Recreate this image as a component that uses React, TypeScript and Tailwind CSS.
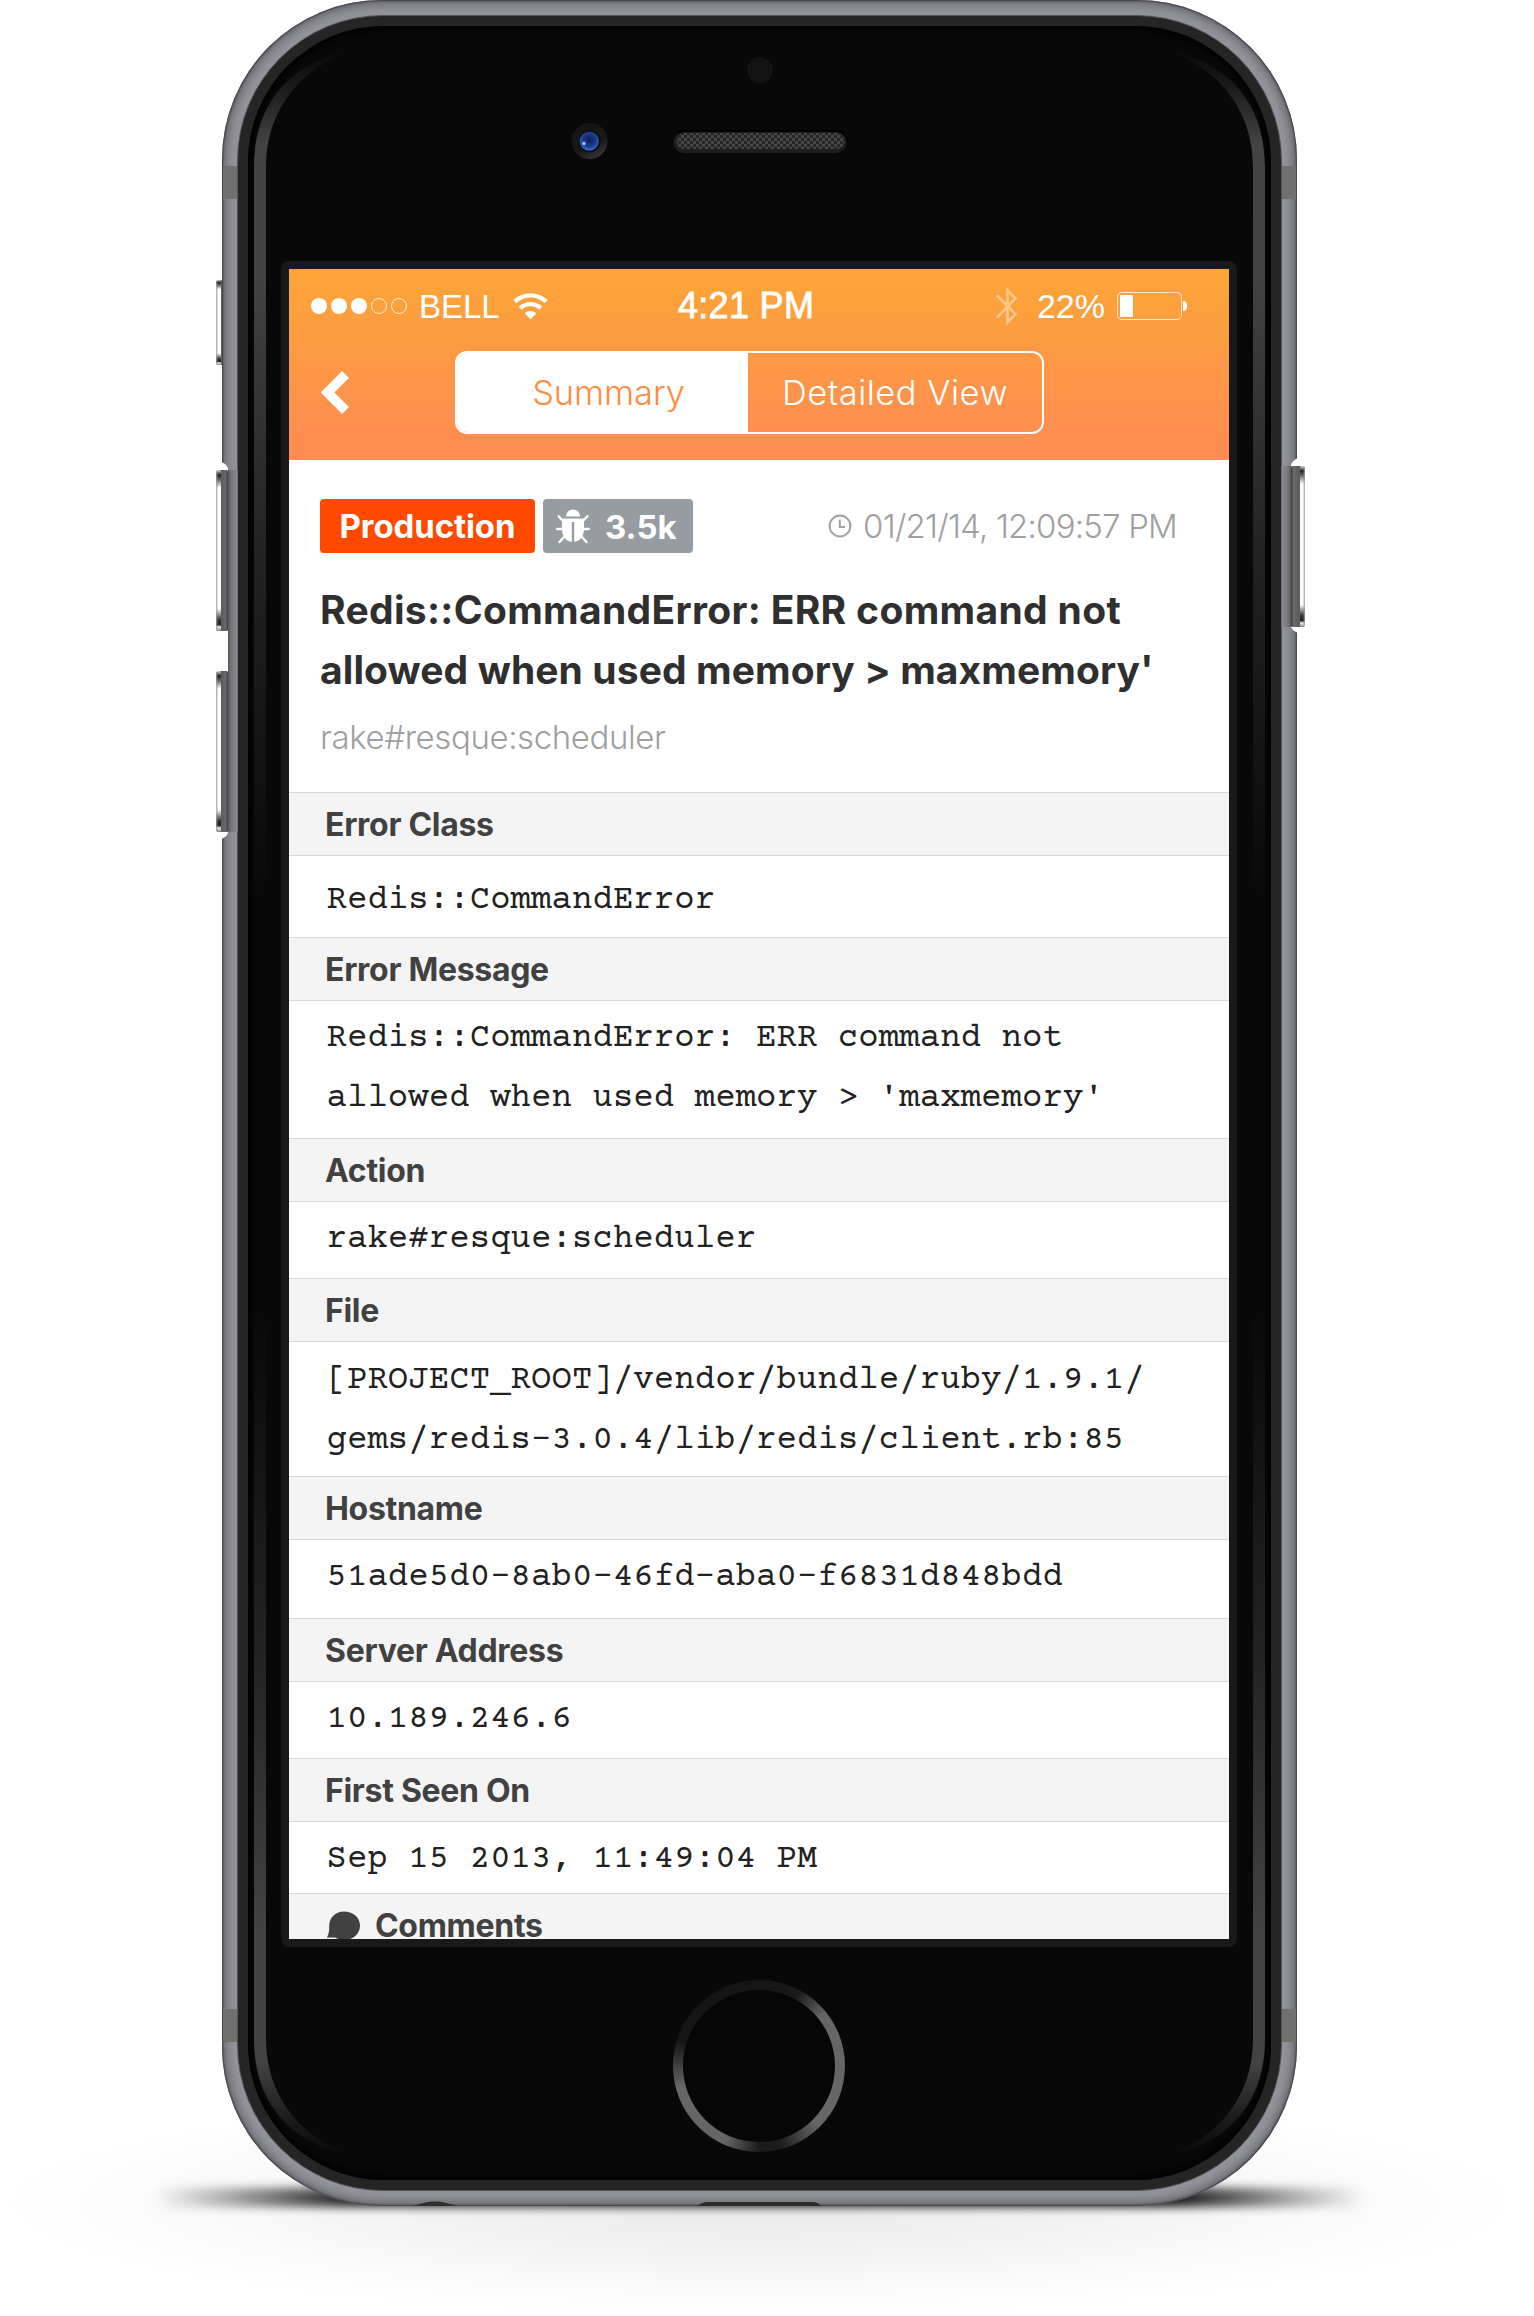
import type { ReactNode } from "react";

type Row = { label: string; lines: string[]; box: string };

const rows: Row[] = [
  { label: "Error Class", lines: ["Redis::CommandError"], box: "h-[81px] pt-[15px]" },
  {
    label: "Error Message",
    lines: ["Redis::CommandError: ERR command not", "allowed when used memory > 'maxmemory'"],
    box: "h-[137px] pt-[8px]",
  },
  { label: "Action", lines: ["rake#resque:scheduler"], box: "h-[76px] pt-[8px]" },
  {
    label: "File",
    lines: ["[PROJECT_ROOT]/vendor/bundle/ruby/1.9.1/", "gems/redis-3.0.4/lib/redis/client.rb:85"],
    box: "h-[134px] pt-[9px]",
  },
  { label: "Hostname", lines: ["51ade5d0-8ab0-46fd-aba0-f6831d848bdd"], box: "h-[78px] pt-[8px]" },
  { label: "Server Address", lines: ["10.189.246.6"], box: "h-[76px] pt-[8px]" },
  { label: "First Seen On", lines: ["Sep 15 2013, 11:49:04 PM"], box: "h-[71px] pt-[8px]" },
];

function WifiIcon() {
  return (
    <svg className="h-[27px] w-[35px]" viewBox="0 0 35 27" fill="none">
      <path d="M1.8 8.6C10.6 0.3 24.4 0.3 33.2 8.6" stroke="#fff" strokeWidth="4.2" />
      <path d="M7.3 15.2C13 9.8 22 9.8 27.7 15.2" stroke="#fff" strokeWidth="4.2" />
      <path d="M11.8 20.2C15 17.2 20 17.2 23.2 20.2L17.5 26.5Z" fill="#fff" />
    </svg>
  );
}

function BluetoothIcon() {
  return (
    <svg className="h-[39px] w-[22px]" viewBox="0 0 22 39" fill="none">
      <path d="M1 8.5 19.5 27 11.5 35.5V3.5L19.5 11.5 1 30.5" stroke="#fff" strokeOpacity="0.42" strokeWidth="2.6" />
    </svg>
  );
}

function BugIcon() {
  return (
    <svg className="h-[35px] w-[34px]" viewBox="0 0 34 35" fill="none">
      <path d="M10 7.6C10 3.6 13 0.6 17 0.6S24 3.6 24 7.6Z" fill="#fff" />
      <path d="M6 9.6H28V20C28 28 23.5 32.6 18.2 32.8V13H15.8V32.8C10.5 32.6 6 28 6 20Z" fill="#fff" />
      <path
        d="M6.5 11.5 2.6 7.2M27.5 11.5 31.4 7.2M6.5 20H1.2M27.5 20H32.8M8.5 27.5 3.5 33M25.5 27.5 30.5 33"
        stroke="#fff"
        strokeWidth="2.4"
        strokeLinecap="round"
      />
    </svg>
  );
}

function ClockIcon() {
  return (
    <svg className="h-[24px] w-[24px]" viewBox="0 0 24 24" fill="none" stroke="#a0a0a0" strokeWidth="2">
      <circle cx="12" cy="12" r="10.4" />
      <path d="M11.8 5.5V13H17" />
    </svg>
  );
}

function CommentIcon() {
  return (
    <svg className="ml-px h-[30px] w-[35px]" viewBox="0 0 35 30">
      <path
        d="M18 0.5C26.5 0.5 34 6 34 14.5S27 29 18 29C14.5 29 11.5 28 9 26.5L0.8 26.6C2.6 23.5 3.4 20.5 3.2 15C3.2 6 10 0.5 18 0.5Z"
        fill="#414141"
      />
    </svg>
  );
}

function SectionHeader({ children }: { children: ReactNode }) {
  return (
    <div className="flex h-[64px] shrink-0 items-center border-y border-[#d9d9d9] bg-[#f4f4f4] pl-[36px] pt-[2px] text-[32px] font-bold tracking-[-0.3px] text-[#414141]">
      {children}
    </div>
  );
}

/* Case-edge highlight, drawn once and mirrored for the other corners. */
const glow = "M254 1103V167C254 112 282 64 352 50C300 69 266 110 266 167V1103Z";

function GlassReflections() {
  return (
    <svg className="pointer-events-none absolute left-0 top-0 h-[2316px] w-[1534px]" viewBox="0 0 1534 2316">
      <defs>
        <linearGradient id="edge" gradientUnits="userSpaceOnUse" x1="0" y1="50" x2="0" y2="900">
          <stop offset="0" stopColor="#080808" />
          <stop offset="0.045" stopColor="#1c1c1c" />
          <stop offset="0.11" stopColor="#434343" />
          <stop offset="0.27" stopColor="#424242" />
          <stop offset="0.58" stopColor="#232323" />
          <stop offset="1" stopColor="#080808" />
        </linearGradient>
        <pattern id="mesh" width="6" height="6" patternUnits="userSpaceOnUse">
          <rect width="6" height="6" fill="#262626" />
          <path d="M0 0h3v3h-3zM3 3h3v3h-3z" fill="#464646" />
        </pattern>
        <radialGradient id="lens" cx="0.5" cy="0.42" r="0.62">
          <stop offset="0" stopColor="#0a1c55" />
          <stop offset="0.6" stopColor="#1c3f92" />
          <stop offset="1" stopColor="#3a78e6" />
        </radialGradient>
        <linearGradient id="rim" x1="0.2" y1="0" x2="0.75" y2="1">
          <stop offset="0" stopColor="#131313" />
          <stop offset="0.65" stopColor="#191919" />
          <stop offset="1" stopColor="#3c3c3c" />
        </linearGradient>
      </defs>
      <path d={glow} fill="url(#edge)" />
      <path d={glow} fill="url(#edge)" transform="translate(1519 0) scale(-1 1)" />
      <path d={glow} fill="url(#edge)" transform="translate(0 2206) scale(1 -1)" />
      <path d={glow} fill="url(#edge)" transform="translate(1519 2206) scale(-1 -1)" />

      <circle cx="760" cy="70" r="13" fill="#131313" />
      <circle cx="589.5" cy="141" r="18" fill="url(#rim)" />
      <circle cx="589.5" cy="141.3" r="11" fill="#0c0c10" />
      <circle cx="589.3" cy="141.3" r="9.5" fill="url(#lens)" />
      <circle cx="584" cy="143.5" r="1.7" fill="#a9c2f2" />
      <rect x="676" y="129.5" width="168" height="12" rx="6" fill="#000" />
      <rect x="673.5" y="132" width="173" height="21" rx="10.5" fill="#1e1e1e" />
      <rect x="676.5" y="133" width="168" height="16" rx="8" fill="url(#mesh)" />
    </svg>
  );
}

function SideButton({ x, y, h, w, flip }: { x: number; y: number; h: number; w: number; flip?: boolean }) {
  return (
    <g transform={flip ? `translate(${2 * x + w} 0) scale(-1 1)` : undefined}>
      <rect x={x} y={y} width={w} height={h} rx="1.5" fill="url(#metal)" />
      <rect x={x} y={y} width="4.5" height={h} rx="1.5" fill="url(#metalEdge)" />
      <rect x={x} y={y + 1} width="0.8" height={h - 2} fill="#8a8a8a" />
    </g>
  );
}

function SideButtons() {
  return (
    <svg className="pointer-events-none absolute left-0 top-0 h-[2316px] w-[1534px]" viewBox="0 0 1534 2316">
      <defs>
        <linearGradient id="metal">
          <stop offset="0" stopColor="#8c8c8c" />
          <stop offset="0.4" stopColor="#5a5a5a" />
          <stop offset="0.8" stopColor="#6a6a6a" />
          <stop offset="1" stopColor="#3c3c3c" />
        </linearGradient>
        <linearGradient id="metalEdge" x1="0" y1="0" x2="0" y2="1">
          <stop offset="0" stopColor="#ddd" />
          <stop offset="0.03" stopColor="#222" />
          <stop offset="0.06" stopColor="#666" />
          <stop offset="0.11" stopColor="#fff" />
          <stop offset="0.86" stopColor="#fff" />
          <stop offset="0.93" stopColor="#333" />
          <stop offset="0.96" stopColor="#222" />
          <stop offset="0.975" stopColor="#eee" />
          <stop offset="1" stopColor="#888" />
        </linearGradient>
        <linearGradient id="cut">
          <stop offset="0" stopColor="#55565a" />
          <stop offset="0.3" stopColor="#74757a" />
          <stop offset="1" stopColor="#8a8b92" />
        </linearGradient>
      </defs>
      <path d="M221 462C225 463.500 228 465.500 228 470V832C228 835 225 837.500 221 839Z" fill="#fff" />
      <rect x="228" y="470" width="9.5" height="362" fill="url(#cut)" />
      <path d="M1298 458C1294 460 1291 462 1291 467V626C1291 629 1294 631 1298 633Z" fill="#fff" />
      <rect x="1281.5" y="466" width="9.5" height="161" fill="url(#cut)" transform="translate(2572.5 0) scale(-1 1)" />
      <SideButton x={216.5} y={280} w={6} h={85} />
      <SideButton x={216.5} y={470} w={11.5} h={161} />
      <SideButton x={216.5} y={671} w={11.5} h={161} />
      <SideButton x={1291} y={466} w={13.5} h={161} flip />
      <path d="M413 2206C422 2203.500 427 2201.500 435 2201.500S448 2203.500 457 2206Z" fill="#2e2e2e" />
      <path d="M697 2206C701 2204 703 2202 708 2202H812C817 2202 818 2204 822 2206Z" fill="#2a2a2a" />
    </svg>
  );
}

export default function App() {
  return (
    <main className="relative h-[2316px] w-[1534px] overflow-hidden bg-white font-['Inter',sans-serif]">
      <div className="absolute left-0 top-[2090px] h-[226px] w-[1519px] bg-[radial-gradient(ellipse_50%_50%_at_50%_50%,#e9e9e9_0%,#f1f1f1_40%,#fafafa_75%,#ffffff_100%)]" />
      <div className="absolute left-[154px] top-[2188px] h-[19px] w-[1211px] rounded-full bg-[linear-gradient(90deg,transparent_0%,#bbbbbb_5%,#222222_16%,#111111_84%,#bbbbbb_95%,transparent_100%)] blur-[5px]" />

      <div className="relative ml-[222px] flex h-[2206px] w-[1075px] flex-col overflow-hidden rounded-[160px] bg-[#94959b] p-[15px] shadow-[inset_0_0_2px_1px_#3c3d42,inset_0_0_12px_3px_#5b5c62]">
        <div className="absolute left-[1px] top-[166px] h-[33px] w-[1073px] bg-[#70706e]" />
        <div className="absolute left-[1px] top-[2009px] h-[33px] w-[1073px] bg-[#70706e]" />
        <div className="relative flex-1 rounded-[146px] border border-[#55565a] bg-[#252525] p-[10px]">
          <div className="h-full rounded-[136px] bg-[#080808] pl-[33px] pt-[235px] shadow-[inset_0_0_7px_3px_#000000]">
            <div className="w-[956px] rounded-lg bg-[#191919] p-2">
              <div className="flex h-[1670px] flex-col overflow-hidden bg-white">
                <header className="h-[191px] shrink-0 bg-[linear-gradient(180deg,#fca636_0%,#fd9944_45%,#ff8b54_100%)] text-white">
                  <div className="grid h-[74px] grid-cols-[389px_200px_1fr] items-center font-['Liberation_Sans',Arial,sans-serif]">
                    <div className="flex items-center pl-[22px]">
                      <div className="flex gap-1">
                        <span className="size-4 rounded-full bg-white" />
                        <span className="size-4 rounded-full bg-white" />
                        <span className="size-4 rounded-full bg-white" />
                        <span className="size-4 rounded-full border border-white/80" />
                        <span className="size-4 rounded-full border border-white/80" />
                      </div>
                      <span className="ml-[12px] mr-[13px] text-[33px] leading-none">BELL</span>
                      <WifiIcon />
                    </div>
                    <span className="whitespace-nowrap text-[36px] leading-none tracking-[0.3px] [-webkit-text-stroke:0.8px_#fff]">
                      4:21 PM
                    </span>
                    <div className="flex items-center justify-end pr-[42px]">
                      <BluetoothIcon />
                      <span className="ml-[19px] mr-[12px] text-[34px] leading-none">22%</span>
                      <span className="flex h-[28px] w-[65px] rounded-[5px] border-[1.5px] border-white/75 p-[2px]">
                        <span className="w-[13px] rounded-[1px] bg-white" />
                      </span>
                      <span className="ml-[1px] h-[10px] w-1 rounded-r-full bg-white" />
                    </div>
                  </div>
                  <div className="flex pt-[8px]">
                    <div className="flex h-[83px] w-[166px] items-center pl-[32px]">
                      <svg className="h-[43px] w-[29px]" viewBox="0 0 29 43" fill="none">
                        <path d="M24.500 3.500 6.500 21.500 24.500 39.500" stroke="#fff" strokeWidth="9.6" />
                      </svg>
                    </div>
                    <div className="flex h-[83px] w-[589px] overflow-hidden rounded-xl border-2 border-white text-[34.5px] font-light leading-none">
                      <div className="flex w-[291px] items-center justify-center bg-white pl-[12px] pt-px tracking-[-0.1px] text-[#ff8c40]">
                        Summary
                      </div>
                      <div className="flex flex-1 items-center justify-center pt-px tracking-[0.5px]">Detailed View</div>
                    </div>
                  </div>
                </header>

                <section className="h-[332px] shrink-0 pl-[31px] pr-[52px] pt-[39px]">
                  <div className="flex h-[54px] items-center">
                    <span className="flex h-full w-[215px] items-center justify-center rounded bg-[#ff4800] pt-[2px] text-[33px] font-bold tracking-[-0.1px] text-white">
                      Production
                    </span>
                    <span className="ml-2 flex h-full w-[150px] items-center rounded bg-[#969ca1] pl-[13px] text-[33px] font-bold text-white">
                      <BugIcon />
                      <span className="ml-[15px] pt-[4px]">3.5k</span>
                    </span>
                    <span className="ml-auto flex items-center whitespace-nowrap text-[33px] font-light tracking-[-0.8px] text-[#a0a0a0]">
                      <ClockIcon />
                      <span className="ml-[11px] pt-px">01/21/14, 12:09:57 PM</span>
                    </span>
                  </div>
                  <h1 className="mt-[27px] whitespace-nowrap text-[39px] font-bold leading-[60px] text-[#2f2f2f]">
                    <span className="block tracking-[0.33px]">Redis::CommandError: ERR command not</span>
                    <span className="block tracking-[0.1px]">allowed when used memory &gt; maxmemory'</span>
                  </h1>
                  <p className="mt-[7px] text-[33px] font-light leading-[60px] tracking-[-0.4px] text-[#9f9f9f]">
                    rake#resque:scheduler
                  </p>
                </section>

                {rows.map((row) => (
                  <section key={row.label} className="shrink-0">
                    <SectionHeader>{row.label}</SectionHeader>
                    <div
                      className={`${row.box} whitespace-pre pl-[37.5px] font-['Courier_Prime','Liberation_Mono',monospace] text-[34px] leading-[60px] tracking-[0.07px] text-[#222222]`}
                    >
                      {row.lines.map((line) => (
                        <div key={line}>{line}</div>
                      ))}
                    </div>
                  </section>
                ))}
                <SectionHeader>
                  <CommentIcon />
                  <span className="ml-[14px]">Comments</span>
                </SectionHeader>
              </div>
            </div>

            <div className="ml-[392px] mt-[33px] size-[172px] rounded-full bg-[conic-gradient(#151515_0deg,#1a1a1a_28deg,#666666_52deg,#666666_135deg,#1c1c1c_165deg,#1c1c1c_180deg,#666666_205deg,#666666_255deg,#151515_287deg,#151515_360deg)] p-[10px]">
              <div className="size-full rounded-full bg-[#060606]" />
            </div>
          </div>
        </div>
      </div>
      <GlassReflections />
      <SideButtons />
    </main>
  );
}
